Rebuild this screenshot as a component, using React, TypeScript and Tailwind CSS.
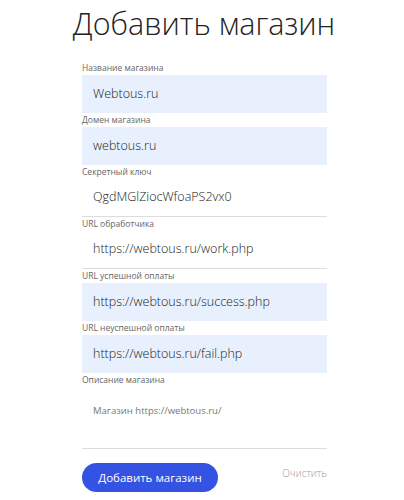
import React from "react";

const font = { fontFamily: '"Open Sans", "Liberation Sans", sans-serif' };

const Field = ({ label, value, filled }: { label: string; value: string; filled: boolean }) => {
    return (
        <div className="flex flex-col">
            <label className="h-[14px] pt-[1px] text-[8.5px] leading-[12px] text-[#666]">{label}</label>
            <div
                className={
                    filled
                        ? "h-[38px] flex items-center pl-[11px] bg-[#e8f0fe] text-[12.5px] font-light text-[#222]"
                        : "h-[38px] flex items-center pl-[11px] border-b border-[#dcdcdc] text-[12.5px] font-light text-[#222]"
                }
            >
                {value}
            </div>
        </div>
    );
};

const App = () => {
    return (
        <div className="w-[404px] h-[500px] bg-white overflow-hidden" style={font}>
            <h1 className="h-[61px] pt-[3px] pl-[4px] text-center text-[30.5px] leading-[40px] font-light text-[#222]">
                Добавить магазин
            </h1>
            <div className="ml-[82px] w-[245px] flex flex-col">
                <Field label="Название магазина" value="Webtous.ru" filled />
                <Field label="Домен магазина" value="webtous.ru" filled />
                <Field label="Секретный ключ" value="QgdMGlZiocWfoaPS2vx0" filled={false} />
                <Field label="URL обработчика" value="https://webtous.ru/work.php" filled={false} />
                <Field label="URL успешной оплаты" value="https://webtous.ru/success.php" filled />
                <Field label="URL неуспешной оплаты" value="https://webtous.ru/fail.php" filled />
                <div className="flex flex-col">
                    <label className="h-[14px] pt-[1px] text-[8.5px] leading-[12px] text-[#666]">Описание магазина</label>
                    <div className="h-[62px] pt-[17px] pl-[11px] border-b border-[#dcdcdc] text-[9.5px] leading-[14px] text-[#777]">
                        Магазин https://webtous.ru/
                    </div>
                </div>
                <div className="mt-[14px] flex items-start justify-between">
                    <button className="h-[29px] w-[136px] rounded-full bg-[#3553e2] text-[11.5px] text-white">
                        Добавить магазин
                    </button>
                    <span className="pt-[3px] text-[10px] font-light text-[#999]">Очистить</span>
                </div>
            </div>
        </div>
    );
};

export default App;
